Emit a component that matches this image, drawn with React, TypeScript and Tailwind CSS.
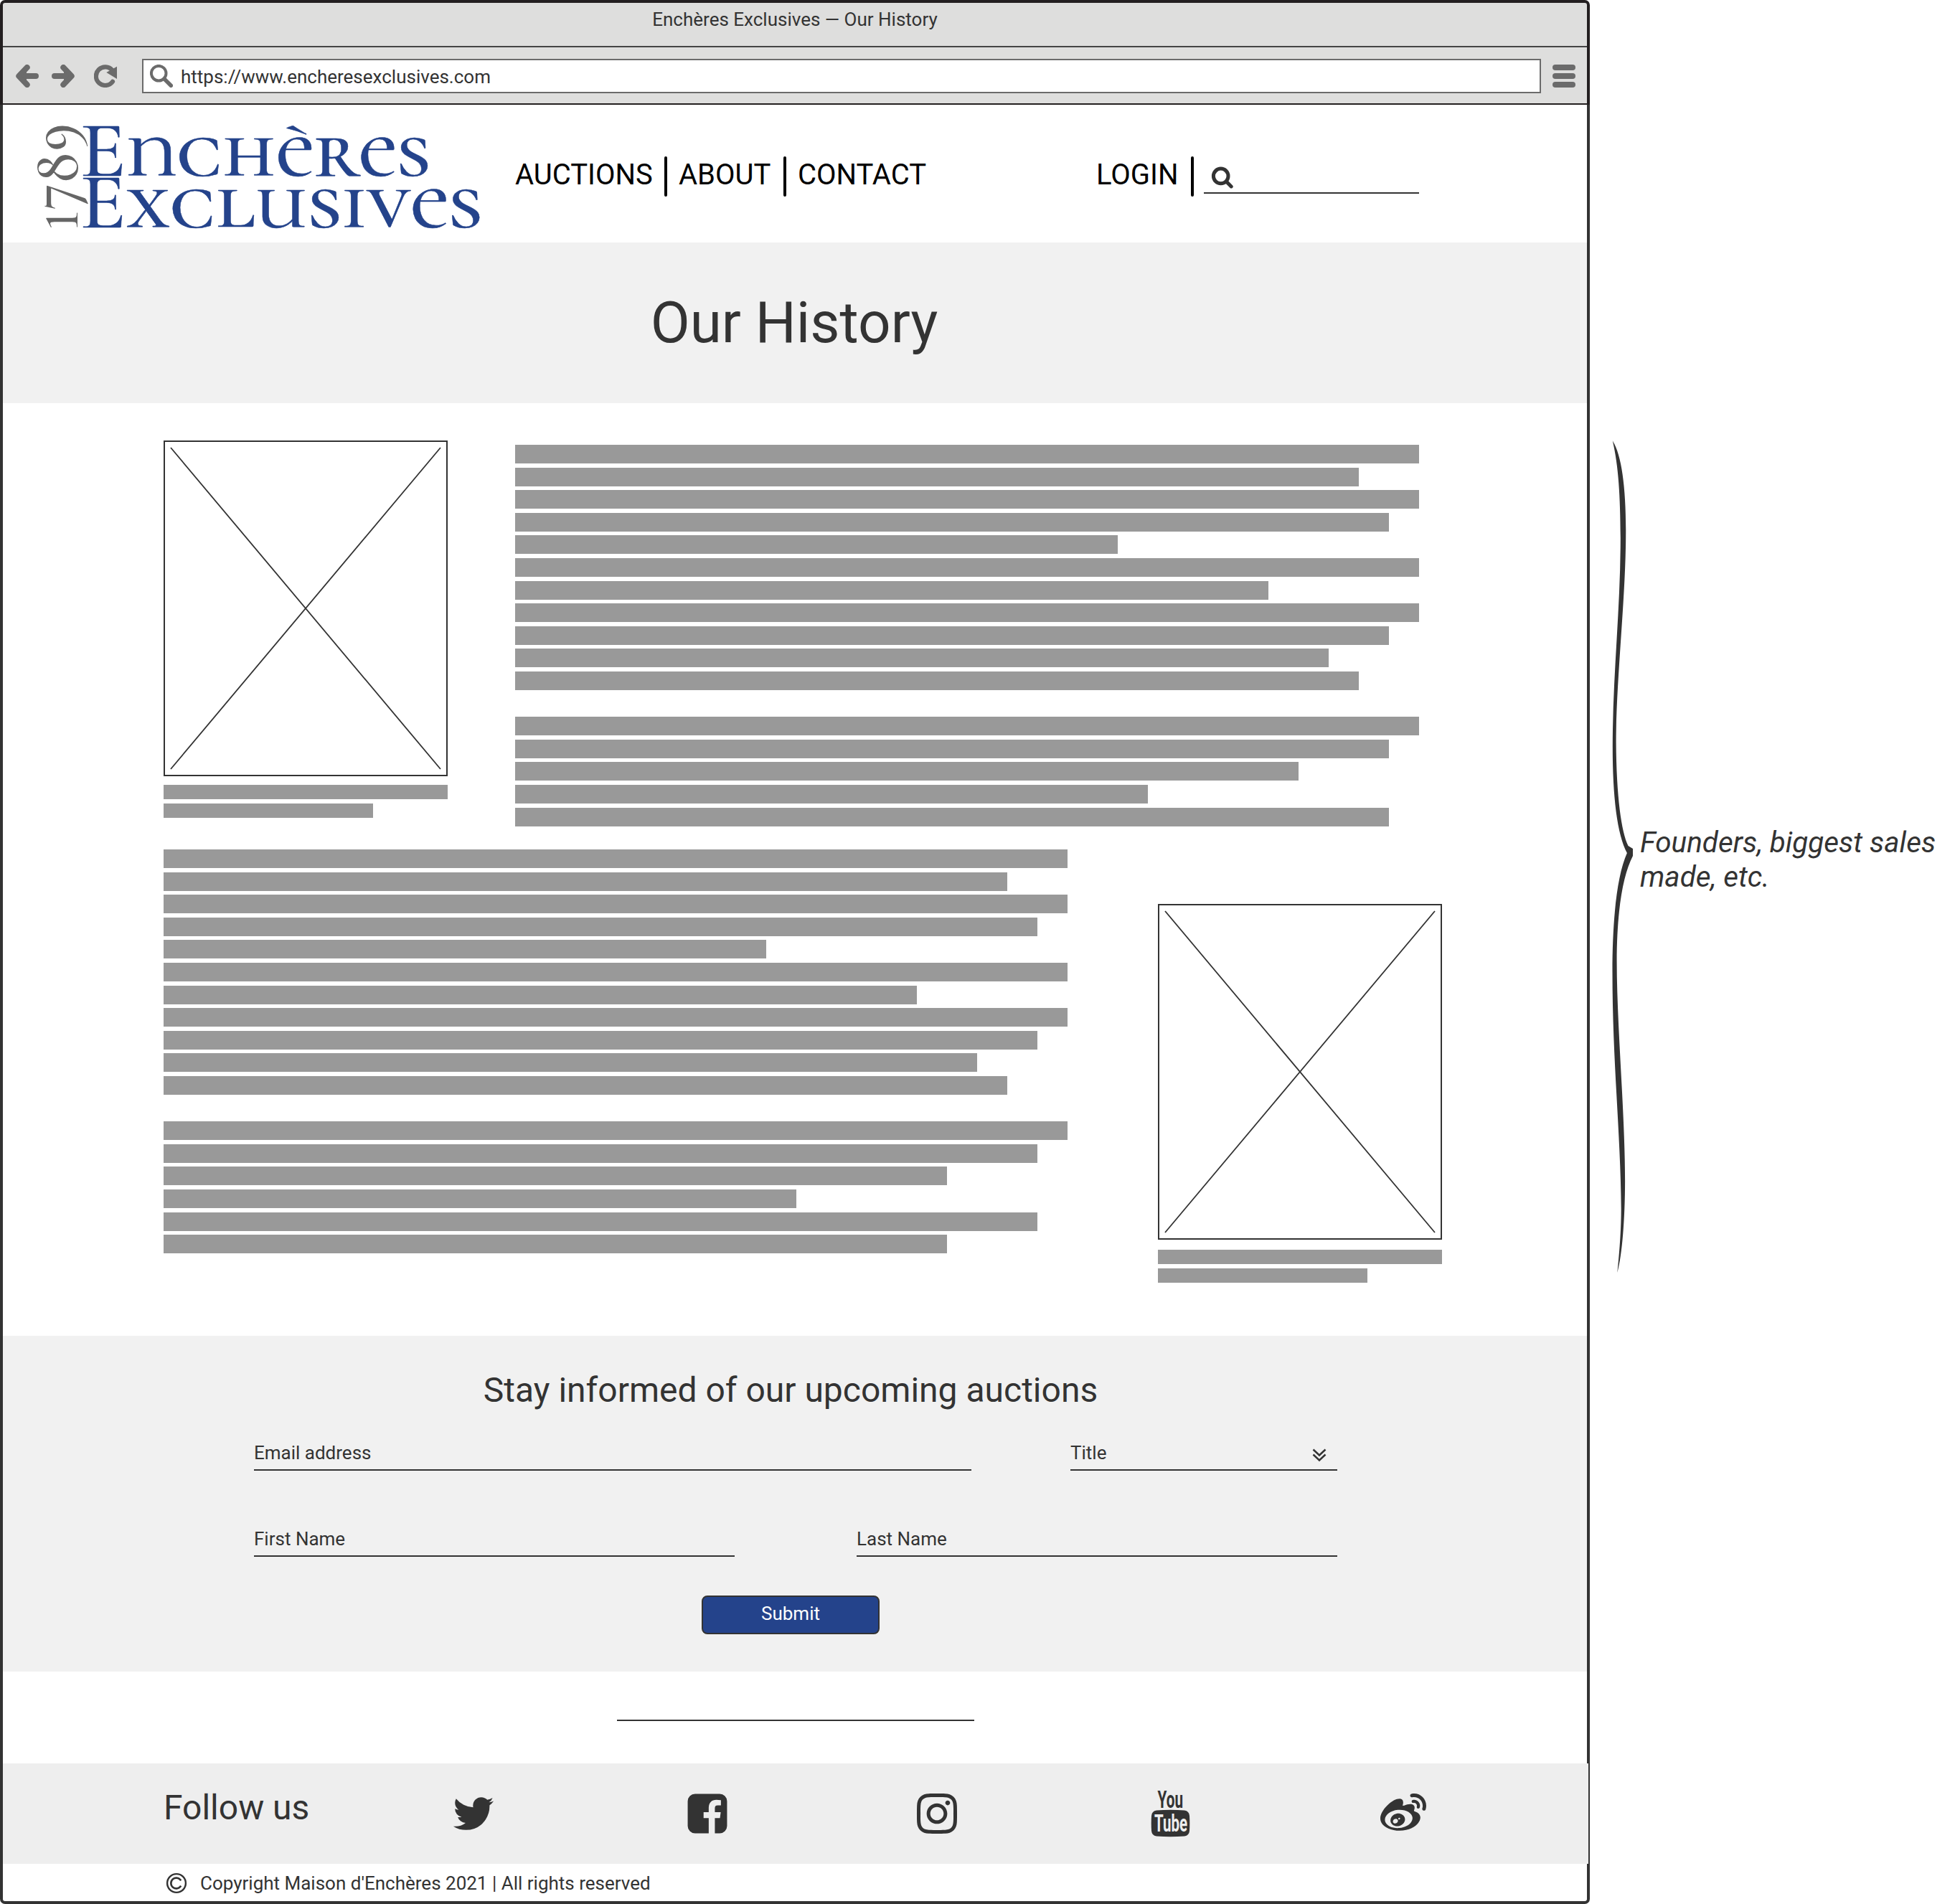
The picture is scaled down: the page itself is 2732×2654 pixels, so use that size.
import React from "react";
import { FaInstagram, FaWeibo } from "react-icons/fa";

const INK = "#333333";

function Logo() {
  return (
    <svg
      className="h-[160px] w-[640px] shrink-0 overflow-visible font-['Cormorant_Unicase','Liberation_Serif',serif]"
      viewBox="0 0 640 160"
    >
      <text fill="#666666" fontSize="91" fontWeight="500" transform="translate(68.300 155.500) rotate(-90) scale(.865 1)">
        1789
      </text>
      <g fill="#24438b" stroke="#24438b" strokeWidth=".5" fontSize="111" fontWeight="500">
        <text transform="translate(71.200 80) scale(1.070 1)">Enchères</text>
        <text transform="translate(71.200 151.700) scale(1.070 1)">Exclusives</text>
      </g>
    </svg>
  );
}

function ArrowIcon({ flip = false }: { flip?: boolean }) {
  return (
    <svg className={flip ? "size-8 -scale-x-100" : "size-8"} viewBox="0 0 32 32" stroke="#6b6b6b" strokeWidth="8" strokeLinecap="round" strokeLinejoin="round" fill="none">
      <path d="M15.700 4 4.300 16l11.400 12M5 16h23" />
      <path d="M15 9 8 16l7 7z" fill="#6b6b6b" stroke="none" />
    </svg>
  );
}

function BrowserChrome() {
  return (
    <header className="flex h-[146px] flex-col rounded-t-[7px] border-x-4 border-t-4 border-b-2 border-[#231f20] bg-[#dededd]">
      <div className="h-[62px] border-b-2 border-[#444444] text-center text-[26px] leading-[46px]">
        Enchères Exclusives — Our History
      </div>
      <div className="flex items-start pt-4 pl-[18px]">
        <div className="flex pt-2">
          <ArrowIcon />
          <div className="w-[18px]" />
          <ArrowIcon flip />
          <svg className="ml-[27px] size-8" viewBox="0 0 32 32" fill="none">
            <path d="M25.500 8A12.800 12.800 0 1 0 26 23.700" stroke="#6b6b6b" strokeWidth="6.200" strokeLinecap="round" />
            <path d="M17.300 11 32 2.700V20z" fill="#6b6b6b" />
          </svg>
        </div>
        <div className="ml-[35px] flex h-12 w-[1950px] items-start border-2 border-[#6b6b6b] bg-white pl-[9px]">
          <svg className="mt-1.5 size-8" viewBox="0 0 32 32" fill="none" stroke="#6b6b6b">
            <circle cx="12.200" cy="12.200" r="10.300" strokeWidth="4" />
            <path d="M20 20l9.300 9.300" strokeWidth="5.500" strokeLinecap="round" />
          </svg>
          <span className="ml-[11px] text-[26px] leading-[46px]">https://www.encheresexclusives.com</span>
        </div>
        <div className="mt-2 ml-4 flex w-8 flex-col gap-1">
          <div className="h-2 rounded-full bg-[#6b6b6b]" />
          <div className="h-2 rounded-full bg-[#6b6b6b]" />
          <div className="h-2 rounded-full bg-[#6b6b6b]" />
        </div>
      </div>
    </header>
  );
}

function Divider() {
  return <div className="h-14 w-1 shrink-0 rounded-full bg-black" />;
}

function SiteNav() {
  return (
    <nav className="flex h-[192px] items-start text-[40px] leading-[52px] text-black">
      <div className="mt-[19px] ml-9">
        <Logo />
      </div>
      <div className="mt-[72px] ml-[38px] flex">
        <span className="w-[208px]">AUCTIONS</span>
        <Divider />
        <span className="ml-4 w-[146px]">ABOUT</span>
        <Divider />
        <span className="ml-4 w-[416px]">CONTACT</span>
        <span className="w-[132px]">LOGIN</span>
        <Divider />
        <div className="ml-3.5 h-[52px] w-[300px] border-b-2 border-[#333333] pt-3.5 pl-2.5">
          <svg className="h-[32px] w-[32px]" viewBox="0 0 32 32" fill="none" stroke={INK}>
            <circle cx="13.700" cy="13.400" r="10.300" strokeWidth="5" />
            <path d="M21.500 21.200l6.700 6.700" strokeWidth="5" strokeLinecap="round" />
          </svg>
        </div>
      </div>
    </nav>
  );
}

function TextLines({ widths }: { widths: number[] }) {
  return (
    <div className="flex w-[1260px] flex-col gap-[5.6px]">
      {widths.map((w, i) => (
        <div key={i} className="h-[26px] shrink-0 bg-[#999999]" style={{ width: w * 42 }} />
      ))}
    </div>
  );
}

function Picture({ captionGap = "mt-3" }: { captionGap?: string }) {
  return (
    <figure className="w-[396px]">
      <div className="h-[468px] border-2 border-[#333333]">
        <svg className="h-full w-full" viewBox="2 2 392 464" stroke={INK} strokeWidth="1.800">
          <path d="M10 10 386 458M386 10 10 458" />
        </svg>
      </div>
      <figcaption className={`flex flex-col gap-1.5 ${captionGap}`}>
        <div className="h-5 bg-[#999999]" />
        <div className="h-5 w-[292px] bg-[#999999]" />
      </figcaption>
    </figure>
  );
}

const PARAGRAPHS = [30, 28, 30, 29, 20, 30, 25, 30, 29, 27, 28, 0, 30, 29, 26, 21, 29];

function Field({ label, className, children }: { label: string; className: string; children?: React.ReactNode }) {
  return (
    <label className={`flex h-11 items-start justify-between border-b-2 border-[#333333] text-[26px] leading-[38px] ${className}`}>
      {label}
      {children}
    </label>
  );
}

function Newsletter() {
  return (
    <section className="h-[468px] bg-[#f1f1f1] pt-11">
      <h2 className="w-[2196px] text-center text-[48px] leading-[64px]">Stay informed of our upcoming auctions</h2>
      <form className="ml-[350px] flex w-[1510px] flex-col pt-9">
        <div className="flex justify-between">
          <Field label="Email address" className="w-[1000px]" />
          <Field label="Title" className="w-[372px]">
            <svg className="mt-3 mr-[13px] h-5 w-6" viewBox="0 0 24 20" fill="none" stroke={INK} strokeWidth="2.500">
              <path d="M3.500 2.500l8.500 8 8.500-8M3.500 9.500l8.500 8 8.500-8" />
            </svg>
          </Field>
        </div>
        <div className="mt-[76px] flex justify-between">
          <Field label="First Name" className="w-[670px]" />
          <Field label="Last Name" className="w-[670px]" />
        </div>
        <button
          type="button"
          className="mt-[54px] ml-[624px] h-[54px] w-[248px] rounded-lg border-2 border-[#333333] bg-[#24438b] pb-1 text-[26px] leading-[46px] text-white"
        >
          Submit
        </button>
      </form>
    </section>
  );
}

function TwitterIcon() {
  return (
    <svg className="size-16" viewBox="0 0 1792 1792" fill={INK}>
      <path d="M1684 408q-67 98-162 167 1 14 1 42 0 130-38 259.500t-115.500 248.500-184.500 210.500-258 146-323 54.500q-271 0-496-145 35 4 78 4 225 0 401-138-105-2-188-64.500t-114-159.500q33 5 61 5 43 0 85-11-112-23-185.500-111.500t-73.500-205.500v-4q68 38 146 41-66-44-105-115t-39-154q0-88 44-163 121 149 294.500 238.500t371.500 99.500q-8-38-8-74 0-134 94.500-228.500t228.500-94.500q140 0 236 102 109-21 205-78-37 115-142 178 93-10 186-50z" />
    </svg>
  );
}

function FacebookIcon() {
  return (
    <svg className="size-16" viewBox="0 0 1792 1792" fill={INK}>
      <path d="M1376 128q119 0 203.500 84.500t84.500 203.500v960q0 119-84.500 203.500t-203.500 84.500h-188v-595h199l30-232h-229v-148q0-56 23.500-84t91.500-28l122-1v-207q-63-9-178-9-136 0-217.500 80t-81.500 226v171h-200v232h200v595h-532q-119 0-203.500-84.500t-84.500-203.500v-960q0-119 84.500-203.500t203.500-84.500h960z" />
    </svg>
  );
}

function YouTubeIcon() {
  return (
    <svg className="size-16 overflow-visible font-[Roboto,sans-serif]" viewBox="0 0 64 64" fontSize="34" fontWeight="700">
      <text x="13.500" y="24" textLength="35.500" lengthAdjust="spacingAndGlyphs" fill={INK}>
        You
      </text>
      <path d="M12 27.500Q31.500 26 51 27.500 57.500 28.500 58 35 58.600 45.500 58 56 57.500 62.500 51 63.500 31.500 65 12 63.500 5.500 62.500 5 56 4.400 45.500 5 35 5.500 28.500 12 27.500z" fill={INK} />
      <text x="9" y="57" textLength="46" lengthAdjust="spacingAndGlyphs" fill="#eeeeee">
        Tube
      </text>
    </svg>
  );
}

function Footer() {
  return (
    <footer>
      <div className="relative -mr-0.5 flex h-[140px] items-start bg-[#eeeeee] pl-[224px]">
        <span className="mt-[34px] w-[400px] text-[48px] leading-[56px]">Follow us</span>
        <div className="mt-[38px] flex">
          <TwitterIcon />
          <div className="ml-[262px]">
            <FacebookIcon />
          </div>
          <FaInstagram className="ml-[256px] size-16" color={INK} />
          <div className="ml-[262px]">
            <YouTubeIcon />
          </div>
          <FaWeibo className="ml-[260px] size-16" color={INK} />
        </div>
      </div>
      <div className="flex items-start pl-[227px]">
        <svg className="mt-3 h-[30px] w-[30px]" viewBox="0 0 30 30" fill="none" stroke={INK}>
          <circle cx="15" cy="15" r="12.900" strokeWidth="2.400" />
          <path d="M21.200 11.400A7.400 7.400 0 1 0 21.200 18.600" strokeWidth="2.600" />
        </svg>
        <span className="ml-[18px] text-[26px] leading-[54px]">
          Copyright Maison d'Enchères 2021 | All rights reserved
        </span>
      </div>
    </footer>
  );
}

export default function App() {
  return (
    <div className="flex h-[2654px] w-[2732px] items-start overflow-hidden bg-white font-[Roboto,sans-serif] text-[#333333]">
      <div className="w-[2216px] shrink-0">
        <BrowserChrome />
        <div className="h-[2508px] rounded-b-[7px] border-x-4 border-b-4 border-[#333333] bg-white">
          <SiteNav />
          <h1 className="h-[224px] bg-[#f1f1f1] pr-0.5 text-center text-[80px] leading-[224px]">Our History</h1>
          <main className="h-[1300px] px-[224px] pt-[52px]">
            <section className="flex h-[570px] items-start">
              <Picture />
              <div className="mt-1.5 ml-[94px]">
                <TextLines widths={PARAGRAPHS} />
              </div>
            </section>
            <section className="flex items-start">
              <TextLines widths={[...PARAGRAPHS, 26]} />
              <div className="mt-[76px] ml-[126px]">
                <Picture captionGap="mt-3.5" />
              </div>
            </section>
          </main>
          <Newsletter />
          <div className="h-32 pt-[67px]">
            <div className="ml-[856px] h-0.5 w-[498px] bg-[#333333]" />
          </div>
          <Footer />
        </div>
      </div>
      <aside className="mt-[600px] ml-6 flex items-start">
        <svg className="h-[1180px] w-10" viewBox="0 0 40 1180" fill={INK}>
          <path d="M7.800 14.500C21 35 27 85 26.200 150 25.500 240 12.600 350 12.600 434 13 510 20 560 29.500 579L36 583V593C22 620 13.600 670 13.600 740 13.600 830 25 950 25.100 1046 25 1100 21 1150 14.300 1174 18 1140 19.700 1110 19.700 1085 19 980 7.500 880 7.500 755 7.500 680 14 620 27.900 589 14 563 7.800 510 7.800 441 7.800 340 18.800 250 18.800 150 18.500 90 16 50 7.800 14.500Z" />
        </svg>
        <p className="mt-[551px] ml-1.5 text-[40.4px] leading-[48px] whitespace-nowrap italic">
          Founders, biggest sales
          <br />
          made, etc.
        </p>
      </aside>
    </div>
  );
}
